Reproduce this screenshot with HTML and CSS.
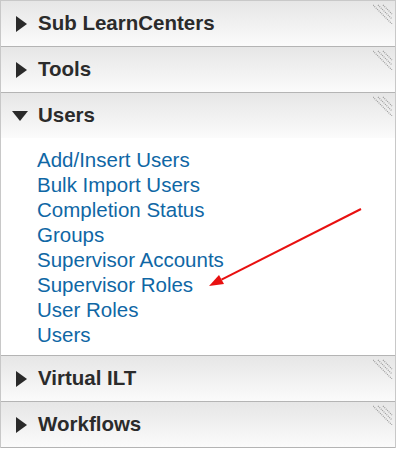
FILE: index.html
```html
<!DOCTYPE html>
<html lang="en">
<head>
  <meta charset="UTF-8">
  <title>LearnCenter Menu</title>
  <link rel="stylesheet" href="styles.css">
</head>
<body>
  <div class="panel">
    <div class="section">
      <div class="section-head">
        <span class="arrow-right"></span>
        <span class="section-title">Sub LearnCenters</span>
        <svg class="grip" width="20" height="20" viewBox="0 0 20 20"><path d="M0 1 L19 20 M5 1 L19 15 M10 1 L19 10"/></svg>
      </div>
    </div>

    <div class="section">
      <div class="section-head">
        <span class="arrow-right"></span>
        <span class="section-title">Tools</span>
        <svg class="grip" width="20" height="20" viewBox="0 0 20 20"><path d="M0 1 L19 20 M5 1 L19 15 M10 1 L19 10"/></svg>
      </div>
    </div>

    <div class="section">
      <div class="section-head">
        <span class="arrow-down"></span>
        <span class="section-title">Users</span>
        <svg class="grip" width="20" height="20" viewBox="0 0 20 20"><path d="M0 1 L19 20 M5 1 L19 15 M10 1 L19 10"/></svg>
      </div>
      <ul class="link-list">
        <li><a href="#">Add/Insert Users</a></li>
        <li><a href="#">Bulk Import Users</a></li>
        <li><a href="#">Completion Status</a></li>
        <li><a href="#">Groups</a></li>
        <li><a href="#">Supervisor Accounts</a></li>
        <li><a href="#">Supervisor Roles</a></li>
        <li><a href="#">User Roles</a></li>
        <li><a href="#">Users</a></li>
        <!-- annotation arrow pointing to Supervisor Roles -->
        <svg class="pointer" width="396" height="217" viewBox="0 0 396 217">
          <line x1="360" y1="71" x2="220.5" y2="141.7" stroke="#e81010" stroke-width="2"/>
          <polygon points="208,148 223,146 218,137" fill="#e81010"/>
        </svg>
      </ul>
    </div>

    <div class="section">
      <div class="section-head">
        <span class="arrow-right"></span>
        <span class="section-title">Virtual ILT</span>
        <svg class="grip" width="20" height="20" viewBox="0 0 20 20"><path d="M0 1 L19 20 M5 1 L19 15 M10 1 L19 10"/></svg>
      </div>
    </div>

    <div class="section">
      <div class="section-head">
        <span class="arrow-right"></span>
        <span class="section-title">Workflows</span>
        <svg class="grip" width="20" height="20" viewBox="0 0 20 20"><path d="M0 1 L19 20 M5 1 L19 15 M10 1 L19 10"/></svg>
      </div>
    </div>
  </div>
</body>
</html>
```

FILE: styles.css
```css
body {
  margin: 0;
  background: #ffffff;
  font-family: "Liberation Sans", Arial, sans-serif;
}

.panel {
  width: 394px;
  border: 1px solid #c8c8c8;
  border-bottom: none;
}

/* 每个分组 */
.section {
  border-bottom: 1px solid #b4b4b4;
}

.section-head {
  position: relative;
  height: 45px;
  display: flex;
  align-items: center;
  background: linear-gradient(to bottom, #e6e6e6, #fbfbfb);
}

.arrow-right {
  width: 0;
  height: 0;
  margin-left: 15px;
  margin-right: 11px;
  border-top: 8px solid transparent;
  border-bottom: 8px solid transparent;
  border-left: 11px solid #2a2a2a;
}

.arrow-down {
  width: 0;
  height: 0;
  margin-left: 11px;
  margin-right: 10px;
  border-left: 8px solid transparent;
  border-right: 8px solid transparent;
  border-top: 10px solid #2a2a2a;
}

.section-title {
  font-size: 20.5px;
  font-weight: bold;
  color: #2b2b2b;
  margin-bottom: 1px;
}

/* 右上角的拖动纹理 */
.grip {
  position: absolute;
  top: 3px;
  right: 2px;
}

.grip path {
  stroke: #9a9a9a;
  stroke-width: 1.2;
  stroke-dasharray: 1 1;
  fill: none;
}

.link-list {
  position: relative;
  list-style: none;
  margin: 0;
  padding: 9px 0 8px 36px;
  background: #ffffff;
}

.link-list li {
  font-size: 20.5px;
  line-height: 25px;
}

.link-list a {
  color: #0f67a5;
  text-decoration: none;
}

.pointer {
  position: absolute;
  top: 0;
  left: 0;
}
```
